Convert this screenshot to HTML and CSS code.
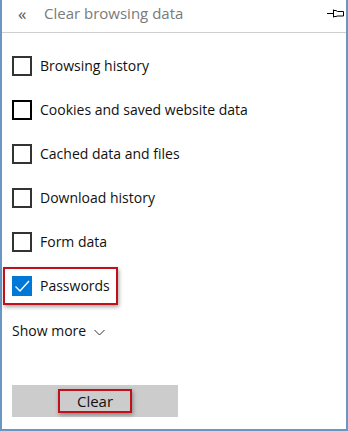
FILE: index.html
```html
<!DOCTYPE html>
<html lang="en">
<head>
    <meta charset="UTF-8">
    <title>Clear browsing data</title>
    <link rel="stylesheet" href="styles.css">
</head>
<body>

<div class="panel">
    <div class="panel-header">
        <span class="back">&laquo;</span>
        <span class="title">Clear browsing data</span>
        <svg class="pin" width="18" height="10" viewBox="0 0 18 10">
            <path d="M0 5.5H6M6.5 1.5V9.5M6.5 2.5H9L10.5 3.5H16.5V8H10.5L9 8.5H6.5" fill="none" stroke="#000" stroke-width="1"/>
        </svg>
    </div>

    <ul class="options">
        <li><span class="box"></span>Browsing history</li>
        <li><span class="box hover"></span>Cookies and saved website data</li>
        <li><span class="box"></span>Cached data and files</li>
        <li><span class="box"></span>Download history</li>
        <li><span class="box"></span>Form data</li>
        <li>
            <span class="marked">
                <span class="box checked">
                    <svg width="20" height="20" viewBox="0 0 20 20"><path d="M3.5 10.5L8 15L17 5" fill="none" stroke="#fff" stroke-width="1.4"/></svg>
                </span>Passwords
            </span>
        </li>
    </ul>

    <div class="show-more">Show more
        <svg width="11" height="7" viewBox="0 0 11 7"><path d="M0.5 1L5.5 6L10.5 1" fill="none" stroke="#333" stroke-width="1"/></svg>
    </div>

    <div class="clear-row">
        <button class="clear-button"><span class="marked-btn">Clear</span></button>
    </div>
</div>

</body>
</html>
```

FILE: styles.css
```css
body {
    margin: 0;
    font-family: "Open Sans", "Noto Sans", sans-serif;
    background: #fff;
}
.panel {
    width: 344px;
    height: 429px;
    border-left: 2px solid #6a96c4;
    border-right: 2px solid #6a96c4;
    border-bottom: 2px solid #6a96c4;
    position: relative;
}
.panel-header {
    height: 32px;
    border-bottom: 1px solid #cfcfcf;
    display: flex;
    align-items: center;
    padding-left: 16px;
}
.back {
    font-size: 17px;
    color: #555;
    width: 26px;
    margin-top: -6px;
}
.title {
    font-size: 15px;
    color: #7a7a7a;
    margin-top: -6px;
}
.pin {
    position: absolute;
    right: 1px;
    top: 8px;
}
.options {
    list-style: none;
    margin: 0;
    padding: 23px 0 0 10px;
}
.options li {
    height: 44px;
    display: flex;
    align-items: flex-start;
    font-size: 14px;
    color: #111;
    line-height: 20px;
}
.box {
    width: 16px;
    height: 16px;
    border: 2px solid #333;
    margin-right: 8px;
    flex-shrink: 0;
}
.box.hover {
    border-color: #000;
}
.box.checked {
    width: 20px;
    height: 20px;
    border: 0;
    background: #0078d7;
}
.box.checked svg {
    display: block;
}
.marked {
    display: flex;
    align-items: center;
    margin: -9px 0 0 -9px;
    padding: 7px 0 7px 7px;
    width: 104px;
    border: 2px solid #c0101a;
    box-shadow: 1px 2px 4px rgba(0, 0, 0, 0.35);
}
.show-more {
    font-size: 14px;
    color: #111;
    padding: 0 0 0 10px;
    margin-top: 1px;
    height: 20px;
    line-height: 20px;
}
.show-more svg {
    margin-left: 4px;
    vertical-align: middle;
}
.clear-row {
    padding: 44px 0 0 10px;
}
.clear-button {
    width: 166px;
    height: 32px;
    background: #cccccc;
    border: 0;
    padding: 0;
    font-family: inherit;
    font-size: 15px;
    color: #111;
    display: flex;
    align-items: center;
    justify-content: center;
}
.marked-btn {
    display: block;
    width: 70px;
    height: 20px;
    line-height: 20px;
    border: 2px solid #c0101a;
    box-shadow: 1px 2px 4px rgba(0, 0, 0, 0.35);
}
```
